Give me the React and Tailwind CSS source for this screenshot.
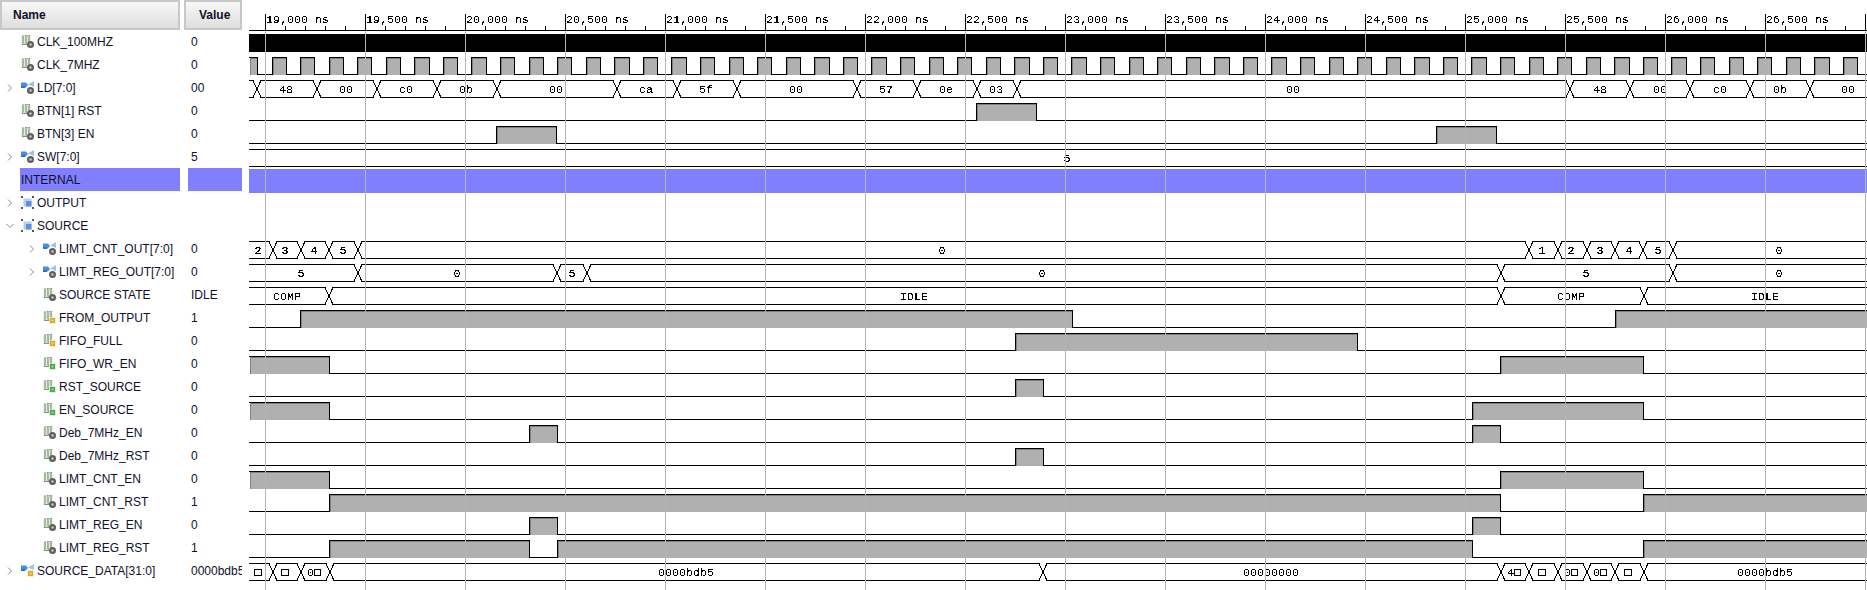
import React from "react";

// left panel rows, one per wave row
const rows = [
  { name: "CLK_100MHZ", value: "0", icon: "bit", badge: "gear" },
  { name: "CLK_7MHZ", value: "0", icon: "bit", badge: "gear" },
  { name: "LD[7:0]", value: "00", icon: "bus", badge: "gear", arrow: "right" },
  { name: "BTN[1] RST", value: "0", icon: "bit", badge: "gear" },
  { name: "BTN[3] EN", value: "0", icon: "bit", badge: "gear" },
  { name: "SW[7:0]", value: "5", icon: "bus", badge: "gear", arrow: "right" },
  { name: "INTERNAL", divider: true },
  { name: "OUTPUT", value: "", icon: "group", arrow: "right" },
  { name: "SOURCE", value: "", icon: "group", arrow: "down" },
  { name: "LIMT_CNT_OUT[7:0]", value: "0", icon: "bus", badge: "gear", arrow: "right", nested: true },
  { name: "LIMT_REG_OUT[7:0]", value: "0", icon: "bus", badge: "gear", arrow: "right", nested: true },
  { name: "SOURCE STATE", value: "IDLE", icon: "bit", badge: "gear", nested: true },
  { name: "FROM_OUTPUT", value: "1", icon: "bit", badge: "yellow", nested: true },
  { name: "FIFO_FULL", value: "0", icon: "bit", badge: "yellow", nested: true },
  { name: "FIFO_WR_EN", value: "0", icon: "bit", badge: "green", nested: true },
  { name: "RST_SOURCE", value: "0", icon: "bit", badge: "green", nested: true },
  { name: "EN_SOURCE", value: "0", icon: "bit", badge: "green", nested: true },
  { name: "Deb_7MHz_EN", value: "0", icon: "bit", badge: "gear", nested: true },
  { name: "Deb_7MHz_RST", value: "0", icon: "bit", badge: "gear", nested: true },
  { name: "LIMT_CNT_EN", value: "0", icon: "bit", badge: "gear", nested: true },
  { name: "LIMT_CNT_RST", value: "1", icon: "bit", badge: "gear", nested: true },
  { name: "LIMT_REG_EN", value: "0", icon: "bit", badge: "gear", nested: true },
  { name: "LIMT_REG_RST", value: "1", icon: "bit", badge: "gear", nested: true },
  { name: "SOURCE_DATA[31:0]", value: "0000bdb5", icon: "bus", badge: "yellow", arrow: "right" },
];

const START = 249;
const END = 1867;
const top = (k) => 34.5 + 23 * k;
const bottom = (k) => 51.5 + 23 * k;

// 7 MHz clock: period 28.57px
const clockPulses = [[START, 257]];
for (let i = 0; i < 56; i++) {
  const rise = 271.5 + i * 28.571;
  clockPulses.push([Math.round(rise), Math.round(rise + 14.286)]);
}

const digital = {
  1: clockPulses,
  3: [[976, 1036]],
  4: [[496, 556], [1436, 1496]],
  12: [[300, 1072], [1615, END]],
  13: [[1015, 1357]],
  14: [[START, 329], [1500, 1643]],
  15: [[1015, 1043]],
  16: [[START, 329], [1472, 1643]],
  17: [[529, 557], [1472, 1500]],
  18: [[1015, 1043]],
  19: [[START, 329], [1500, 1643]],
  20: [[329, 1500], [1643, END]],
  21: [[529, 557], [1472, 1500]],
  22: [[329, 529], [557, 1472], [1643, END]],
};

const buses = {
  2: {
    edges: [257, 317, 377, 437, 497, 617, 677, 737, 857, 917, 977, 1017, 1570, 1630, 1690, 1750, 1810],
    labels: [[286, "48"], [346, "00"], [406, "c0"], [466, "0b"], [556, "00"], [646, "ca"], [706, "5f"], [796, "00"], [886, "57"], [946, "0e"], [996, "03"], [1293, "00"], [1600, "48"], [1660, "00"], [1720, "c0"], [1780, "0b"], [1848, "00"]],
  },
  5: { edges: [], labels: [[1067, "5"]] },
  9: {
    edges: [273, 301, 329, 358, 1529, 1558, 1587, 1615, 1643, 1673],
    labels: [[258, "2"], [285, "3"], [314, "4"], [343, "5"], [942, "0"], [1542, "1"], [1571, "2"], [1600, "3"], [1629, "4"], [1658, "5"], [1779, "0"]],
  },
  10: {
    edges: [358, 557, 587, 1501, 1673],
    labels: [[301, "5"], [457, "0"], [572, "5"], [1042, "0"], [1586, "5"], [1779, "0"]],
  },
  11: {
    edges: [329, 1501, 1644],
    labels: [[287, "COMP"], [914, "IDLE"], [1571, "COMP"], [1765, "IDLE"]],
  },
  23: {
    edges: [273, 301, 330, 1043, 1501, 1529, 1558, 1587, 1615, 1644],
    labels: [[258, "□"], [285, "□"], [314, "0□"], [686, "0000bdb5"], [1271, "00000000"], [1514, "4□"], [1542, "□"], [1571, "0□"], [1600, "0□"], [1628, "□"], [1765, "0000bdb5"]],
  },
};

const digitalLine = (k, pulses) => {
  const hi = top(k);
  const lo = bottom(k);
  let d = "";
  let x = START;
  pulses.forEach(([a, b]) => {
    if (a > x) d += `M${x} ${lo}H${a + 0.5}V${hi}`;
    else d += `M${a} ${hi}`;
    d += `H${b + 0.5}`;
    if (b < END) d += `V${lo}`;
    x = b;
  });
  if (x < END) d += `H${END}`;
  return d;
};

const busLine = (k, edges) => {
  const hi = top(k);
  const lo = bottom(k);
  let d = "";
  let x = START;
  edges.forEach((c) => {
    d += `M${x} ${hi}H${c - 4}L${c + 4} ${lo}M${x} ${lo}H${c - 4}L${c + 4} ${hi}`;
    x = c + 4;
  });
  d += `M${x} ${hi}H${END}M${x} ${lo}H${END}`;
  return d;
};

const grid = [];
for (let x = 265.5; x < END; x += 100) grid.push(x);
const minor = [];
for (let x = 265.5; x < END; x += 20) minor.push(x);

const Waves = () => (
  <svg className="shrink-0 font-['Liberation_Mono','DejaVu_Sans_Mono',monospace]" width="1618" height="590" viewBox="249 0 1618 590">
    <defs>
      <filter id="hard" x="0" y="0" width="100%" height="100%" colorInterpolationFilters="sRGB">
        <feComponentTransfer>
          <feFuncA type="discrete" tableValues="0 0 1 1 1" />
        </feComponentTransfer>
      </filter>
    </defs>

    <rect x={START} y="34" width={END - START} height="18" fill="#000" />
    <rect x={START} y="169" width={END - START} height="24" fill="#8080ff" />

    {Object.entries(digital).map(([k, pulses]) =>
      pulses.map(([a, b]) => (
        <g key={`${k}-${a}`} shapeRendering="crispEdges">
          <rect x={a + 1} y={top(+k)} width={b - a} height="17.5" fill="#b0b0b0" />
          <path d={`M${a + 1.5} ${top(+k) + 17.5}V${top(+k) + 1}H${b}`} stroke="#808080" fill="none" />
        </g>
      ))
    )}
    {Object.entries(digital).map(([k, pulses]) => (
      <path key={k} d={digitalLine(+k, pulses)} stroke="#000" fill="none" shapeRendering="crispEdges" />
    ))}
    {Object.entries(buses).map(([k, bus]) => (
      <path key={k} d={busLine(+k, bus.edges)} stroke="#000" fill="none" shapeRendering="crispEdges" />
    ))}

    <g filter="url(#hard)" fontSize="11.67" fill="#000">
      {Object.entries(buses).map(([k, bus]) =>
        bus.labels.map(([x, text]) => (
          <text key={`${k}-${x}`} x={x} y={top(+k) + 12.5} textAnchor="middle">
            {text}
          </text>
        ))
      )}
    </g>

    {grid.map((x) => (
      <line key={x} x1={x} x2={x} y1="14" y2="590" stroke="#b4b4b4" shapeRendering="crispEdges" />
    ))}

    <path d={`M${START} 30.5H${END}`} stroke="#000" shapeRendering="crispEdges" />
    {minor.map((x) => (
      <line key={x} x1={x} x2={x} y1="26" y2="30" stroke="#000" shapeRendering="crispEdges" />
    ))}
    {grid.map((x, i) => (
      <g key={x}>
        <line x1={x} x2={x} y1="14" y2="30" stroke="#000" shapeRendering="crispEdges" />
        {x + 70 < END && (
          <text x={x + 0.5} y="23" fontSize="11.67" fill="#000" filter="url(#hard)">
            {`${(19000 + i * 500).toLocaleString("en-US")} ns`}
          </text>
        )}
      </g>
    ))}
  </svg>
);

const badgeColors = { yellow: "#e0a81c", green: "#4ca64c" };

const Badge = ({ type }) =>
  type === "gear" ? (
    <g>
      <circle cx="9.5" cy="9.5" r="3.5" fill="#5f5f5f" />
      <circle cx="9.5" cy="9.5" r="1.2" fill="#c8c8c8" />
    </g>
  ) : (
    <g>
      <rect x="6.5" y="6.5" width="6" height="6" fill={badgeColors[type]} stroke="#fff" strokeWidth="0.6" />
      <rect x="8.5" y="8.5" width="2" height="2" fill="#fff" fillOpacity="0.5" />
    </g>
  );

const SignalIcon = ({ icon, badge }) => (
  <svg className="shrink-0" width="13" height="13" viewBox="0 0 13 13">
    {icon === "bit" && (
      <g fill="none">
        <path d="M2 0.5V9H5V0.5H8V7" stroke="#7d9b76" strokeWidth="2.2" />
        <path d="M2 1V8.5H5V1H8V7" stroke="#eef4ea" strokeWidth="0.7" />
      </g>
    )}
    {icon === "bus" && (
      <g>
        <path d="M0 1.5h5l2 2.5-2 2.5H0z" fill="#4a90d9" />
        <path d="M0 5h4v2H0z" fill="#2f74c0" />
        <path d="M7 3.5L13 0v6z" fill="#9cc4e8" />
      </g>
    )}
    {icon === "group" && (
      <g>
        <rect x="2.5" y="2.5" width="8" height="8" fill="#b7d0ee" />
        <rect x="5" y="5" width="5.5" height="5.5" fill="#5a94d8" />
        <path d="M0 0h2v2H0zM11 0h2v2h-2zM0 11h2v2H0zM11 11h2v2h-2z" fill="#555" />
      </g>
    )}
    {badge && <Badge type={badge} />}
  </svg>
);

const Chevron = ({ dir }) => (
  <svg className="shrink-0" width="8" height="8" viewBox="0 0 8 8">
    <path d={dir === "down" ? "M0.5 2l3.5 3.5L7.5 2" : "M2 0.5L5.5 4 2 7.5"} fill="none" stroke="#8a8a8a" />
  </svg>
);

const SignalRow = ({ row }) => {
  if (row.divider) {
    return (
      <div className="flex h-[23px]">
        <div className="ml-5 flex w-[160px] items-center bg-[#8080ff] pl-px">{row.name}</div>
        <div className="ml-2 w-[54px] bg-[#8080ff]" />
      </div>
    );
  }
  return (
    <div className="flex h-[23px] items-center">
      <div className={`flex w-[184px] items-center gap-[3px] ${row.nested ? "pl-[22px]" : ""}`}>
        <div className="flex w-[18px] shrink-0 justify-start pl-[6px]">
          {row.arrow && <Chevron dir={row.arrow} />}
        </div>
        <SignalIcon icon={row.icon} badge={row.badge} />
        <span className="whitespace-nowrap">{row.name}</span>
      </div>
      <div className="w-[58px] overflow-hidden whitespace-nowrap pl-[7px]">{row.value}</div>
    </div>
  );
};

const HeaderCell = ({ className, children }) => (
  <div className={`flex h-[30px] items-center border-2 border-[#c8c8c8] bg-gradient-to-b from-[#f8f8f8] to-[#dedede] font-bold ${className}`}>
    {children}
  </div>
);

export default function App() {
  return (
    <div className="flex h-[590px] w-[1867px] overflow-hidden bg-white font-['Liberation_Sans',sans-serif] text-[12px] leading-none text-[#10102a]">
      <div className="w-[249px] shrink-0">
        <div className="flex gap-1">
          <HeaderCell className="w-[180px] pl-[11px]">Name</HeaderCell>
          <HeaderCell className="w-[58px] pl-[13px]">Value</HeaderCell>
        </div>
        {rows.map((row) => (
          <SignalRow key={row.name} row={row} />
        ))}
      </div>
      <Waves />
    </div>
  );
}
